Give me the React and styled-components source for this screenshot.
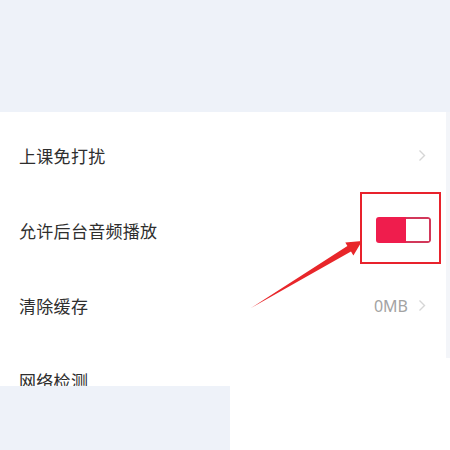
import React from 'react';
import styled, { createGlobalStyle } from 'styled-components';

const Global = createGlobalStyle`
  html, body {
    margin: 0;
    padding: 0;
    background: #fff;
  }
  body {
    font-family: "Noto Sans", "Noto Sans CJK SC", sans-serif;
  }
`

const Page = styled.div`
  position: relative;
  width: 450px;
  height: 450px;
  overflow: hidden;
  background: #fff;
`

const TopBand = styled.div`
  height: 112px;
  background: #eef2f9;
`

const Body = styled.div`
  display: flex;
  align-items: flex-start;
`

const List = styled.div`
  width: 446px;
  padding-top: 6px;
  background: #fff;
`

const EdgeStrip = styled.div`
  width: 4px;
  height: 246px;
  background: #f3f5f9;
`

const Row = styled.div`
  height: 75px;
  display: flex;
  align-items: center;
  justify-content: space-between;
  padding: 0 20px 0 19px;
`

const Label = styled.span`
  font-family: "Noto Sans CJK SC", "Noto Sans", sans-serif;
  font-size: 17px;
  color: #2e2e2e;
  letter-spacing: 0.3px;
`

const Right = styled.div`
  display: flex;
  align-items: center;
  gap: 10px;
`

const Value = styled.span`
  font-family: "Noto Sans", sans-serif;
  font-size: 16px;
  color: #a3a3a3;
`

const Toggle = styled.div`
  display: flex;
  width: 55px;
  height: 26px;
  border-radius: 3px;
  overflow: hidden;
  margin-right: -5px;
  margin-top: -2px;
`

const ToggleOn = styled.div`
  width: 30px;
  background: #ef1d4d;
`

const ToggleKnob = styled.div`
  flex: 1;
  background: #fff;
  border: 2px solid #d2385a;
  border-left: none;
  border-radius: 0 3px 3px 0;
`

const Cover = styled.div`
  position: absolute;
  left: 0;
  top: 386px;
  width: 230px;
  height: 64px;
  background: #eef2f9;
`

const Mark = styled.div`
  position: absolute;
  left: 360px;
  top: 192px;
  width: 77px;
  height: 68px;
  border: 2px solid #e8222c;
`

const Arrow = styled.svg`
  position: absolute;
  left: 0;
  top: 0;
  pointer-events: none;
`

const Chevron = () => (
  <svg width="8" height="13" viewBox="0 0 8 13">
    <polyline points="1.5,1.5 6.5,6.5 1.5,11.5" fill="none" stroke="#d6d6d6" strokeWidth="1.4" />
  </svg>
)

export default function App() {
  return (
    <Page>
      <Global />
      <TopBand />
      <Body>
        <List>
          <Row>
            <Label>上课免打扰</Label>
            <Right><Chevron /></Right>
          </Row>
          <Row>
            <Label>允许后台音频播放</Label>
            <Toggle>
              <ToggleOn />
              <ToggleKnob />
            </Toggle>
          </Row>
          <Row>
            <Label>清除缓存</Label>
            <Right>
              <Value>0MB</Value>
              <Chevron />
            </Right>
          </Row>
          <Row>
            <Label>网络检测</Label>
          </Row>
        </List>
        <EdgeStrip />
      </Body>
      <Cover />
      <Mark />
      <Arrow width="450" height="450" viewBox="0 0 450 450">
        <polygon
          points="251,308 351,251.5 353.4,255.5 362,241 345.3,242.4 347.4,246"
          fill="#e8262a"
        />
      </Arrow>
    </Page>
  );
}
